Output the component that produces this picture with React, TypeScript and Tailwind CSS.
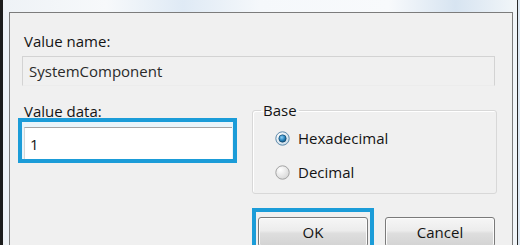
function Radio({ checked }: { checked?: boolean }) {
  const id = checked ? "rc" : "ru"
  return (
    <svg width="15" height="15" viewBox="0 0 15 15" className="shrink-0">
      <defs>
        <radialGradient id={`${id}-bg`} cx="0.35" cy="0.3" r="0.8">
          <stop offset="0" stopColor="#ffffff" />
          <stop offset="1" stopColor={checked ? "#c9dbe8" : "#d4d4d4"} />
        </radialGradient>
        <radialGradient id={`${id}-dot`} cx="0.4" cy="0.35" r="0.7">
          <stop offset="0" stopColor="#8fd0f5" />
          <stop offset="0.55" stopColor="#2b86bf" />
          <stop offset="1" stopColor="#0f4d78" />
        </radialGradient>
      </defs>
      <circle cx="7.5" cy="7.5" r="6.7" fill={`url(#${id}-bg)`} stroke={checked ? "#5f8bab" : "#a3a3a3"} strokeWidth="1" />
      {checked && <circle cx="7.5" cy="7.5" r="3.7" fill={`url(#${id}-dot)`} stroke="#0e3f63" strokeWidth="0.6" />}
    </svg>
  )
}

function Button({ label }: { label: string }) {
  return (
    <div className="flex h-[30px] w-[110px] items-center justify-center rounded-[3px] border border-[#7a7a7a] bg-[linear-gradient(180deg,#f6f6f6_0%,#ececec_45%,#dedede_55%,#d3d3d3_100%)] shadow-[inset_0_0_0_1px_#fcfcfc]">
      {label}
    </div>
  )
}

export default function App() {
  return (
    <div className="flex h-[245px] w-[520px] overflow-hidden bg-[#f3f6f9] font-['Open_Sans',sans-serif] text-[15px] leading-[18px] text-[#141414]">
      <div className="w-[3px] bg-[#1c1c1c]" />
      <div className="flex flex-1 flex-col bg-[linear-gradient(90deg,#eef2f6_0%,#f7f9fb_20%,#dfeaf5_35%,#f5f8fb_50%,#f8fafc_75%,#d7e4f1_88%,#f2f6f9_100%)] pl-[6px] pr-[4px] pt-[12px]">
        <div className="flex-1 border-l border-r border-t border-[#7c7c7c] bg-[#f0f0f0] pl-[12px] pt-[19px]">
          <div className="pl-[2px]">Value name:</div>
          <div className="mt-[6px] flex h-[30px] w-[473px] items-center border border-[#d3d3d3] border-b-[#ececec] pl-[6px] text-[#2a2a2a]">
            SystemComponent
          </div>

          <div className="-ml-[4px] mt-[15px] flex items-start gap-[15px]">
            <div className="w-[219px] pt-[1px]">
              <div className="h-[16px] pl-[6px]">Value data:</div>
              <div className="h-[45px] border-4 border-[#1b9cd8] bg-[#e9f5fb] pl-[2px] pr-[1px] pt-[5px]">
                <div className="flex h-[32px] items-center border-l border-t border-[#a5a5a5] border-l-[#d6d6d6] bg-white pl-[5px]">
                  1
                </div>
              </div>
            </div>

            <div className="w-[245px]">
              <fieldset className="h-[93px] rounded-[3px] border border-[#d8d8d8] shadow-[inset_1px_1px_0_#ffffff]">
                <legend className="ml-[8px] px-[2px]">Base</legend>
                <div className="pl-[22px]">
                  <div className="mt-[9px] flex h-[20px] items-center gap-[8px]">
                    <Radio checked />
                    <span>Hexadecimal</span>
                  </div>
                  <div className="mt-[14px] flex h-[20px] items-center gap-[8px]">
                    <Radio />
                    <span>Decimal</span>
                  </div>
                </div>
              </fieldset>

              <div className="mt-[14px] flex items-start gap-[11px]">
                <div className="w-[122px] border-4 border-b-0 border-[#1b9cd8] pl-[2px] pt-[5px]">
                  <Button label="OK" />
                </div>
                <div className="mt-[9px]">
                  <Button label="Cancel" />
                </div>
              </div>
            </div>
          </div>
        </div>
      </div>
      <div className="w-[1px] bg-[#2a2a2a]" />
      <div className="w-[2px] bg-[#dfe9f3]" />
    </div>
  )
}
